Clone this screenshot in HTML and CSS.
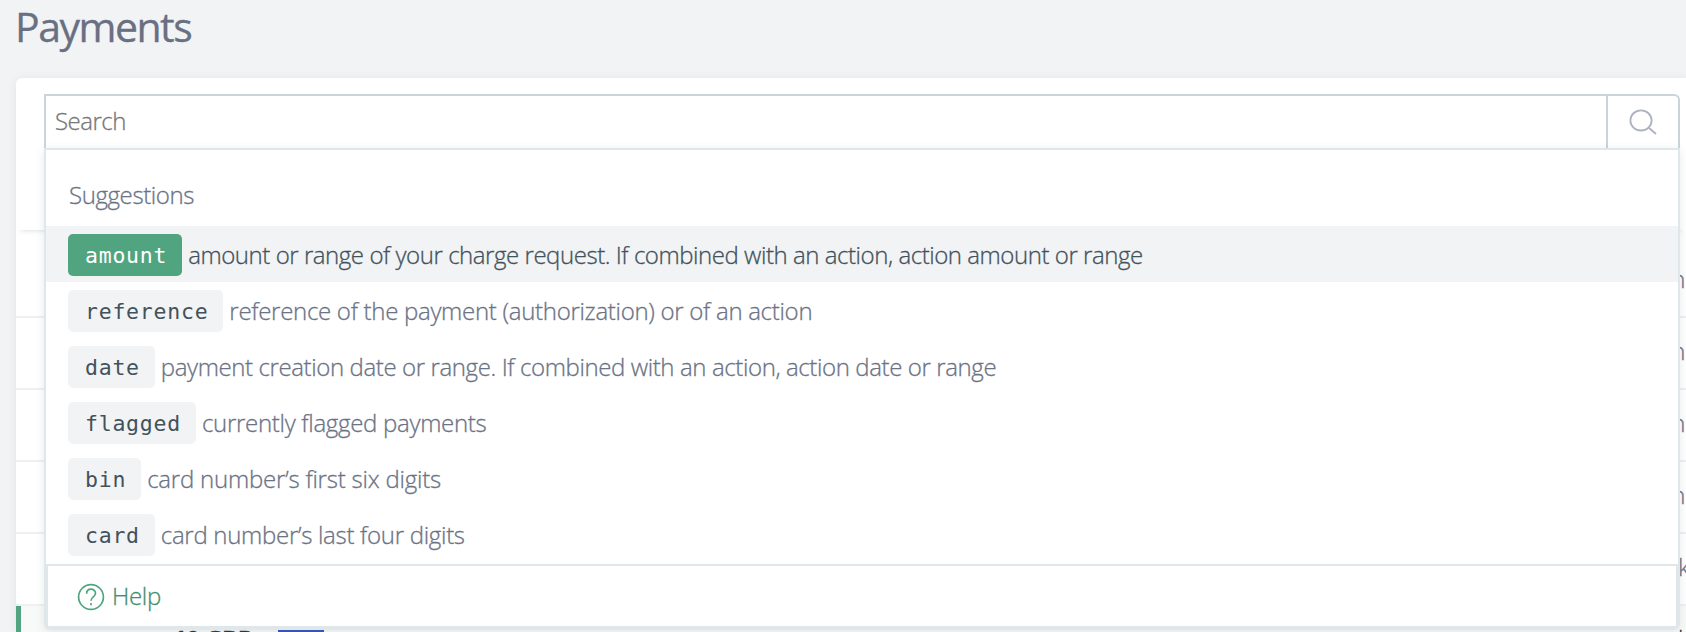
FILE: index.html
```html
<!DOCTYPE html>
<html lang="en">
<head>
<meta charset="utf-8">
<title>Payments</title>
<link rel="stylesheet" href="styles.css">
</head>
<body>
<h1 class="title">Payments</h1>
<main class="card">
  <div class="toolbar">
    <div class="search">
      <div class="field"><span class="placeholder">Search</span></div>
      <div class="search-button">
        <svg width="28" height="28" viewBox="0 0 28 28" fill="none" stroke="#adb2c0" stroke-width="1.8"><ellipse cx="12" cy="11.4" rx="10.6" ry="10.1"/><path d="M19.8 18.8 27 25"/></svg>
      </div>
      <section class="dropdown">
        <div class="heading">Suggestions</div>
        <div class="item active"><code class="tag">amount</code><span class="desc long">amount or range of your charge request. If combined with an action, action amount or range</span></div>
        <div class="item"><code class="tag">reference</code><span class="desc">reference of the payment (authorization) or of an action</span></div>
        <div class="item"><code class="tag">date</code><span class="desc medium">payment creation date or range. If combined with an action, action date or range</span></div>
        <div class="item"><code class="tag">flagged</code><span class="desc">currently flagged payments</span></div>
        <div class="item"><code class="tag">bin</code><span class="desc short">card number’s first six digits</span></div>
        <div class="item"><code class="tag">card</code><span class="desc">card number’s last four digits</span></div>
        <div class="help">
          <svg width="28" height="28" viewBox="0 0 28 28" fill="none" stroke="#50a580" stroke-width="1.7"><circle cx="14" cy="14" r="12.4"/><path d="M9.6 10.8c0-6.2 8.9-5.9 8.9-.5 0 3.8-4.5 3.4-4.5 7.5"/><path d="M14 20v2.2"/></svg>
          <span class="help-text">Help</span>
        </div>
      </section>
    </div>
  </div>
  <div class="row first"><span class="status">n</span></div>
  <div class="row"><span class="status">n</span></div>
  <div class="row"><span class="status">n</span></div>
  <div class="row"><span class="status">n</span></div>
  <div class="row"><span class="status wide">k</span></div>
  <div class="row selected"><span class="amount">10 GBP</span><span class="badge"></span><span class="status wide">k</span></div>
</main>
</body>
</html>
```
FILE: styles.css
```css
* { box-sizing: border-box; }
html, body { height: 100%; }
body {
  margin: 0;
  padding-left: 16px;
  overflow: hidden;
  background: #f2f3f5;
  color: #6b7385;
  font: 300 24px/32px "Open Sans", "Noto Sans", sans-serif;
  letter-spacing: -.5px;
  -webkit-text-stroke: .3px;
}
.title {
  margin: 0 0 0 -1px;
  height: 78px;
  font-size: 41px;
  font-weight: 400;
  line-height: 53px;
  color: #687082;
  letter-spacing: -1.5px;
  white-space: nowrap;
}
.card {
  height: 554px;
  border-top-left-radius: 6px;
  background: #fff;
  box-shadow: 0 0 8px rgba(60, 80, 100, .08);
}
.toolbar {
  height: 152px;
  padding: 16px 6px 0 28px;
  box-shadow: 0 5px 5px -5px rgba(60, 80, 100, .25);
}
.search {
  position: relative;
  display: flex;
  height: 54px;
  border: 2px solid #c8d5db;
  border-bottom: 0;
  border-top-right-radius: 6px;
  background: #fff;
}
.field {
  flex: 1;
  padding: 9px 9px 0;
  border-right: 2px solid #c8d5db;
  color: #777;
}
.search-button {
  display: flex;
  width: 70px;
  padding: 13px 0 0 21px;
}
.dropdown {
  position: absolute;
  top: 52px;
  left: -2px;
  right: -2px;
  height: 482px;
  border: 2px solid #e0e7eb;
  border-radius: 0 0 6px 6px;
  background: #fff;
  box-shadow: 0 2px 10px rgba(60, 80, 100, .12);
}
.heading {
  height: 76px;
  padding: 29px 23px 0;
  letter-spacing: -.4px;
}
.item {
  display: flex;
  gap: 6px;
  height: 56px;
  padding: 8px 22px 0;
}
.active { background: #f2f3f5; color: #42525b; }
.tag {
  height: 42px;
  padding: 0 15px 0 17px;
  border-radius: 5px;
  background: #f2f3f5;
  color: #42525b;
  font: 400 21.5px/44px "DejaVu Sans Mono", monospace;
  letter-spacing: .76px;
  -webkit-text-stroke: 0;
}
.active .tag { background: #50a580; color: #fff; }
.desc { line-height: 42px; letter-spacing: -.29px; white-space: nowrap; }
.desc.long { letter-spacing: -.45px; }
.desc.medium { letter-spacing: -.39px; }
.desc.short { letter-spacing: -.21px; }
.help {
  display: flex;
  gap: 7px;
  height: 64px;
  margin-top: 2px;
  padding: 14px 29px 0;
  border: 2px solid #e0e7eb;
  color: #438f70;
  letter-spacing: -.3px;
}
.help svg { margin-top: 3px; }
.row {
  display: flex;
  height: 72px;
  border-bottom: 2px solid #edf1f4;
}
.row.first { height: 88px; padding-top: 16px; }
.status { flex: none; width: 16px; margin: 17px 1px 0 auto; text-align: right; }
.status.wide { margin-right: -8px; text-align: left; }
.row.selected {
  gap: 24px;
  height: 26px;
  padding: 17px 0 0 152px;
  border-left: 5px solid #50a580;
  border-bottom: 0;
  background: #f8faf9;
  overflow: hidden;
}
.selected .status { margin-top: 0; color: #2c3638; }
.amount { width: 78px; height: 32px; color: #2c3638; font-weight: 700; white-space: nowrap; }
.badge { width: 46px; height: 30px; margin: 7px 0 0 3px; background: #3656b8; }
```
